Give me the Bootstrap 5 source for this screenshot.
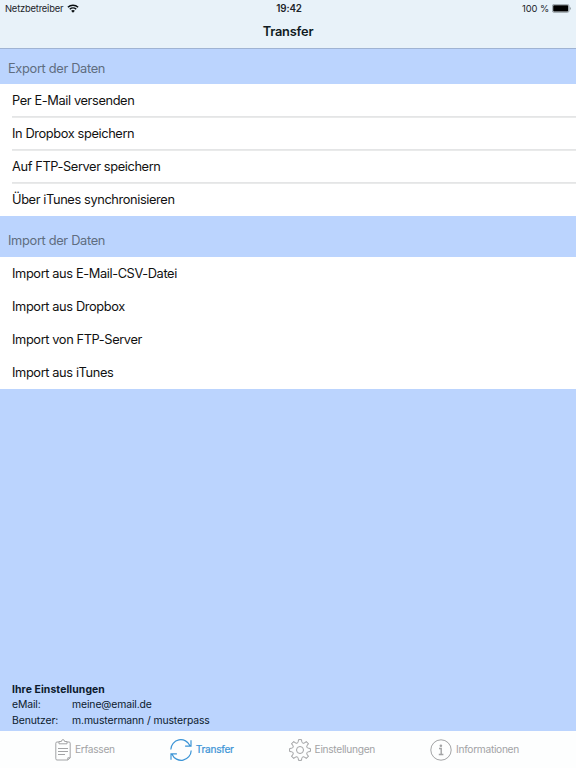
<!DOCTYPE html>
<html lang="de">
<head>
<meta charset="utf-8">
<meta name="viewport" content="width=device-width, initial-scale=1">
<title>Transfer</title>
<link href="https://cdn.jsdelivr.net/npm/bootstrap@5.3.0/dist/css/bootstrap.min.css" rel="stylesheet">
<style>
body{font-family:Inter,"Liberation Sans",sans-serif;background:#bbd4fe;color:#111;font-size:13px;line-height:16px}
.top{height:49px;background:#e8f2f9;border-bottom:1px solid #9fb3d3}
.status{height:16px;font-size:9.4px;letter-spacing:-.2px;line-height:17px;color:#1c2429;padding:0 5px}
.status>div{flex:1 1 0}
.percent{letter-spacing:-.1px;margin-right:-1px}
.clock{font-size:9.8px;letter-spacing:-.15px;padding-left:2px}
.title{font-size:12.8px;line-height:32px;letter-spacing:-.2px;color:#101b22}
.section-title{height:35px;padding:11px 8px 0;color:#5f6d80;font-size:12.8px;letter-spacing:-.32px;line-height:17px}
.section-title.second{height:41px;padding-top:16px}
.rows .list-group-item{height:33px;padding:0;margin-left:12px;border:0;line-height:33px;color:#111;background:none;font-size:12.8px;letter-spacing:-.38px}
.rows.lined .list-group-item{line-height:34px}
.rows.lined .list-group-item:not(:last-child){border-bottom:1px solid #e4e5e6}
.rows.lined .list-group-item+.list-group-item{border-top:1px solid #e9eaea;line-height:32px}
.rows.lined .list-group-item:first-child{line-height:34px}
.account{padding:0 12px 3px;font-size:10.4px;line-height:15.5px;letter-spacing:-.11px;color:#0c1a2c}
.account .fw-bold{letter-spacing:.1px}
.account dt{width:60px}
.tabs{height:37px;padding:0 55px;gap:55px;font-size:10.2px;letter-spacing:-.3px;background:#fdfefe}
.tabs .nav-link{color:#a2a3a5;padding:0;gap:4px}
.tabs .nav-link span{margin-top:-1px}
.tabs .nav-link.active{color:#3b94d6}
.tabs .active span{-webkit-text-stroke:.2px currentColor}
.tabs svg{fill:none;stroke:currentColor}
</style>
<script src="https://cdn.jsdelivr.net/npm/bootstrap@5.3.0/dist/js/bootstrap.bundle.min.js"></script>
</head>
<body class="vh-100 d-flex flex-column overflow-hidden">
<header class="top flex-shrink-0">
  <div class="status d-flex">
    <div class="d-flex align-items-center gap-1"><span>Netzbetreiber</span>
      <svg width="12" height="9" viewBox="0 0 12 9" fill="none" stroke="#080d10" stroke-width="1.5"><path d="M.9 3.2a7.4 7.4 0 0 1 10.200 0M2.800 5.200a4.700 4.700 0 0 1 6.400 0"/><path d="M6 8.700 4.100 6.800a2.800 2.800 0 0 1 3.800 0Z" fill="#080d10" stroke="none"/></svg>
    </div>
    <span class="clock fw-semibold">19:42</span>
    <div class="d-flex align-items-center justify-content-end gap-1"><span class="percent">100 %</span>
      <svg width="19" height="9" viewBox="0 0 19 9"><rect x=".4" y=".4" width="16.600" height="8" rx="1.600" fill="none" stroke="#8c969c" stroke-width=".8"/><rect x="1.200" y="1.300" width="15" height="6.200" rx=".8" fill="#000"/><path d="M17.800 3v3q1-.3 1-1.500T17.800 3" fill="#8c969c"/></svg>
    </div>
  </div>
  <h1 class="title fw-semibold text-center mb-0">Transfer</h1>
</header>
<main class="flex-grow-1 d-flex flex-column">
  <h2 class="section-title fw-normal mb-0">Export der Daten</h2>
  <div class="bg-white"><ul class="rows lined list-group list-group-flush">
    <li class="list-group-item">Per E-Mail versenden</li>
    <li class="list-group-item">In Dropbox speichern</li>
    <li class="list-group-item">Auf FTP-Server speichern</li>
    <li class="list-group-item">Über iTunes synchronisieren</li>
  </ul></div>
  <h2 class="section-title second fw-normal mb-0">Import der Daten</h2>
  <div class="bg-white"><ul class="rows list-group list-group-flush">
    <li class="list-group-item">Import aus E-Mail-CSV-Datei</li>
    <li class="list-group-item">Import aus Dropbox</li>
    <li class="list-group-item">Import von FTP-Server</li>
    <li class="list-group-item">Import aus iTunes</li>
  </ul></div>
  <section class="account mt-auto">
    <div class="fw-bold">Ihre Einstellungen</div>
    <dl class="mb-0">
      <div class="d-flex"><dt class="fw-normal">eMail:</dt><dd class="mb-0">meine@email.de</dd></div>
      <div class="d-flex"><dt class="fw-normal">Benutzer:</dt><dd class="mb-0">m.mustermann / musterpass</dd></div>
    </dl>
  </section>
</main>
<nav class="tabs nav flex-nowrap flex-shrink-0">
  <a class="nav-link d-flex align-items-center" href="#"><svg width="16" height="22" viewBox="0 0 16 22" stroke-width="1"><path d="M4 3H2Q.8 3 .8 4.200v15.600Q.8 21 2 21h10.800l2.400-2.200V4.200Q15.200 3 14 3h-2M12.800 21v-2.200h2.400M4 4.800V2.500h2.400Q6.600.6 8 .6t1.600 1.900H12v2.300zM3 9.500h10M3 12.500h10M3 15.500h7"/></svg><span>Erfassen</span></a>
  <a class="nav-link active d-flex align-items-center" href="#"><svg width="22" height="22" viewBox="0 0 22 22" stroke-width="1.200"><path d="M.8 10.500A10 10 0 0 1 20 6.800M21 1.200v5.900h-5.900M21.200 11.500A10 10 0 0 1 2 15.200M1 20.800v-5.900h5.900"/></svg><span>Transfer</span></a>
  <a class="nav-link d-flex align-items-center" href="#"><svg width="22" height="22" viewBox="-11 -11 22 22" stroke-width="1"><defs><path id="tooth" d="M-2.900-7Q-1.900-7.200-1.800-8.200L-1.500-10.400H1.500L1.800-8.200Q1.900-7.200 2.900-7"/></defs><circle r="3.500"/><use href="#tooth"/><use href="#tooth" transform="rotate(45)"/><use href="#tooth" transform="rotate(90)"/><use href="#tooth" transform="rotate(135)"/><use href="#tooth" transform="rotate(180)"/><use href="#tooth" transform="rotate(225)"/><use href="#tooth" transform="rotate(270)"/><use href="#tooth" transform="rotate(315)"/></svg><span>Einstellungen</span></a>
  <a class="nav-link d-flex align-items-center" href="#"><svg width="22" height="22" viewBox="0 0 22 22" stroke-width="1"><circle cx="11" cy="11" r="10.200"/><circle cx="10.900" cy="6.700" r="1.300" fill="currentColor" stroke="none"/><path d="M9 9.500h2.200v6M8.800 15.500h4.600" stroke-width="1.400"/></svg><span>Informationen</span></a>
</nav>
</body>
</html>
